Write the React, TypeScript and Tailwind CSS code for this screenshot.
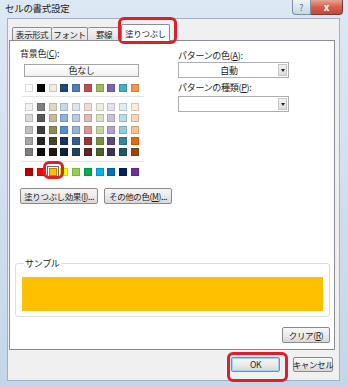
const jp = "font-['Noto_Sans_CJK_JP','Noto_Sans',sans-serif]";

const themeTop = ["#ffffff", "#000000", "#eeece1", "#1f497d", "#4f81bd", "#c0504d", "#9bbb59", "#8064a2", "#4bacc6", "#f79646"];

const themeShades = [
  ["#f2f2f2", "#7f7f7f", "#ddd9c3", "#c6d9f0", "#dbe5f1", "#f2dcdb", "#ebf1dd", "#e5e0ec", "#dbeef3", "#fdeada"],
  ["#d8d8d8", "#595959", "#c4bd97", "#8db3e2", "#b8cce4", "#e5b9b7", "#d7e3bc", "#ccc1d9", "#b7dde8", "#fbd5b5"],
  ["#bfbfbf", "#3f3f3f", "#938953", "#548dd4", "#95b3d7", "#d99694", "#c3d69b", "#b2a2c7", "#92cddc", "#fac08f"],
  ["#a5a5a5", "#262626", "#494429", "#17365d", "#366092", "#953734", "#76923c", "#5f497a", "#31859b", "#e36c09"],
  ["#7f7f7f", "#0c0c0c", "#1d1b10", "#0f243e", "#244061", "#632423", "#4f6128", "#3f3151", "#205867", "#974806"],
];

const standard = ["#c00000", "#ff0000", "#ffc000", "#ffff00", "#92d050", "#00b050", "#00b0f0", "#0070c0", "#002060", "#7030a0"];

function Swatch({ c, selected }: { c: string; selected?: boolean }) {
  return (
    <div
      className={
        selected
          ? "w-[8px] h-[8px] border border-black/30 outline outline-1 outline-offset-1 outline-[#6b6b6b]"
          : "w-[8px] h-[8px] border border-black/15"
      }
      style={{ background: c }}
    />
  );
}

function Row({ colors, sel }: { colors: string[]; sel?: number }) {
  return (
    <div className="flex gap-x-[3.75px]">
      {colors.map((c, i) => (
        <Swatch key={i} c={c} selected={i === sel} />
      ))}
    </div>
  );
}

function Btn({ children, className = "" }: { children: React.ReactNode; className?: string }) {
  return (
    <div
      className={
        "flex items-center justify-center whitespace-nowrap rounded-[2px] border border-[#8a8a8a] bg-gradient-to-b from-[#f6f6f6] via-[#ebebeb] to-[#d8d8d8] text-[8.5px] leading-none tracking-[-0.4px] text-[#1a1a1a] " +
        className
      }
    >
      {children}
    </div>
  );
}

function Combo({ value }: { value?: string }) {
  return (
    <div className="flex h-[16px] w-[111px] items-stretch border border-[#abadb3] bg-white p-px">
      <div className="flex flex-1 items-center justify-center text-[9px] leading-none">{value}</div>
      <div className="flex w-[9px] items-center justify-center border border-[#c5c5c5] bg-gradient-to-b from-[#f4f4f4] to-[#dedede]">
        <div className="h-0 w-0 border-x-[2.5px] border-t-[3px] border-x-transparent border-t-[#222]" />
      </div>
    </div>
  );
}

function Mark({ className }: { className: string }) {
  return <div className={"absolute rounded-[6px] border-[3px] border-[#dc1f2b] " + className} />;
}

export default function App() {
  return (
    <div className={"relative h-[387px] w-[348px] overflow-hidden bg-gradient-to-b from-[#dde8f4] to-[#c4d6ea] text-[#1b1b1b] " + jp}>
      {/* Title bar */}
      <div className="flex h-[18px] items-start justify-between pl-[5px] pr-[5px]">
        <div className="pt-[4px] text-[9.5px] leading-none tracking-[-0.3px] text-[#222]">セルの書式設定</div>
        <div className="flex">
          <div className="flex h-[15px] w-[19px] items-center justify-center rounded-bl-[4px] border border-t-0 border-[#7e8ea3] bg-gradient-to-b from-[#eef3f9] to-[#c9d6e5] text-[9px] leading-none text-[#5d6f86]">
            ?
          </div>
          <div className="flex h-[15px] w-[32px] items-center justify-center rounded-br-[4px] border border-l-0 border-t-0 border-[#7a3a32] bg-gradient-to-b from-[#e8a493] via-[#d2614d] to-[#c44a36] text-[10px] font-bold leading-none text-white">
            x
          </div>
        </div>
      </div>

      {/* Client */}
      <div className="ml-[7px] flex h-[363px] w-[333px] flex-col border border-[#9fb2c8] bg-[#f0f0f0]">
        {/* Tabs */}
        <div className="flex h-[21px] items-end pl-[4px] text-[8.5px] leading-none tracking-[-0.4px]">
          <div className="flex h-[13px] w-[40px] items-center justify-center rounded-t-[2px] border border-b-0 border-[#898c95] bg-gradient-to-b from-[#f3f3f3] to-[#e1e1e1]">
            表示形式
          </div>
          <div className="flex h-[13px] w-[36px] items-center justify-center rounded-t-[2px] border border-b-0 border-l-0 border-[#898c95] bg-gradient-to-b from-[#f3f3f3] to-[#e1e1e1]">
            フォント
          </div>
          <div className="flex h-[13px] w-[33px] items-center justify-center rounded-t-[2px] border border-b-0 border-l-0 border-[#898c95] bg-gradient-to-b from-[#f3f3f3] to-[#e1e1e1]">
            罫線
          </div>
          <div className="relative z-10 -mb-px flex h-[17px] w-[49px] items-center justify-center rounded-t-[2px] border border-b-0 border-[#898c95] bg-white">
            塗りつぶし
          </div>
        </div>

        {/* Panel */}
        <div className="ml-px flex h-[310px] w-[326px] flex-col border border-[#898c95] bg-white text-[9px] leading-[11px] tracking-[-0.3px]">
          <div className="flex">
            {/* Background colour */}
            <div className="w-[168px] pl-[10px] pt-[7px]">
              <div className="h-[11px]">
                背景色(<span className="underline">C</span>):
              </div>
              <div className="ml-[4px] mt-[5px] flex h-[13px] w-[115px] items-center justify-center border border-[#a5a5a5] bg-gradient-to-b from-white to-[#f1f1f1] leading-none">
                色なし
              </div>
              <div className="ml-[5px] mt-[7px]">
                <Row colors={themeTop} />
              </div>
              <div className="ml-[2px] mt-[4px] h-px w-[122px] bg-[#e4e4e4]" />
              <div className="ml-[5px] mt-[6px] flex flex-col gap-y-[3.25px]">
                {themeShades.map((r, i) => (
                  <Row key={i} colors={r} />
                ))}
              </div>
              <div className="ml-[2px] mt-[5px] h-px w-[122px] bg-[#e4e4e4]" />
              <div className="ml-[5px] mt-[6px]">
                <Row colors={standard} sel={2} />
              </div>
              <div className="mt-[12px] flex gap-[6px]">
                <Btn className="h-[16px] w-[78px]">
                  塗りつぶし効果(<span className="underline">I</span>)...
                </Btn>
                <Btn className="h-[16px] w-[68px]">
                  その他の色(<span className="underline">M</span>)...
                </Btn>
              </div>
            </div>

            {/* Pattern */}
            <div className="pt-[9px]">
              <div className="h-[11px]">
                パターンの色(<span className="underline">A</span>):
              </div>
              <div className="mt-[1px]">
                <Combo value="自動" />
              </div>
              <div className="mt-[4px] h-[11px]">
                パターンの種類(<span className="underline">P</span>):
              </div>
              <div className="mt-[3px]">
                <Combo />
              </div>
            </div>
          </div>

          <div className="flex-1" />

          {/* Sample */}
          <fieldset className="ml-[5px] w-[315px] rounded-[3px] border border-[#d5dfe5] px-[6px] pb-[5px]">
            <legend className="ml-[2px] px-px">サンプル</legend>
            <div className="mt-[8px] h-[34px] bg-[#ffc000]" />
          </fieldset>

          <div className="flex justify-end pb-[6px] pr-[4px] pt-[10px]">
            <Btn className="h-[16px] w-[48px]">
              クリア(<span className="underline">R</span>)
            </Btn>
          </div>
        </div>

        {/* Dialog buttons */}
        <div className="flex justify-end gap-[13px] pr-[6px] pt-[7px]">
          <Btn className="h-[15px] w-[49px] border-[#3c7fb1] shadow-[inset_0_0_0_1px_#9fd4f5]">OK</Btn>
          <Btn className="h-[15px] w-[40px]">キャンセル</Btn>
        </div>
      </div>

      {/* Red highlight annotations */}
      <Mark className="left-[118px] top-[17px] h-[27px] w-[59px]" />
      <Mark className="left-[43px] top-[161px] h-[18px] w-[21px]" />
      <Mark className="left-[227px] top-[352px] h-[30px] w-[61px]" />
    </div>
  );
}
